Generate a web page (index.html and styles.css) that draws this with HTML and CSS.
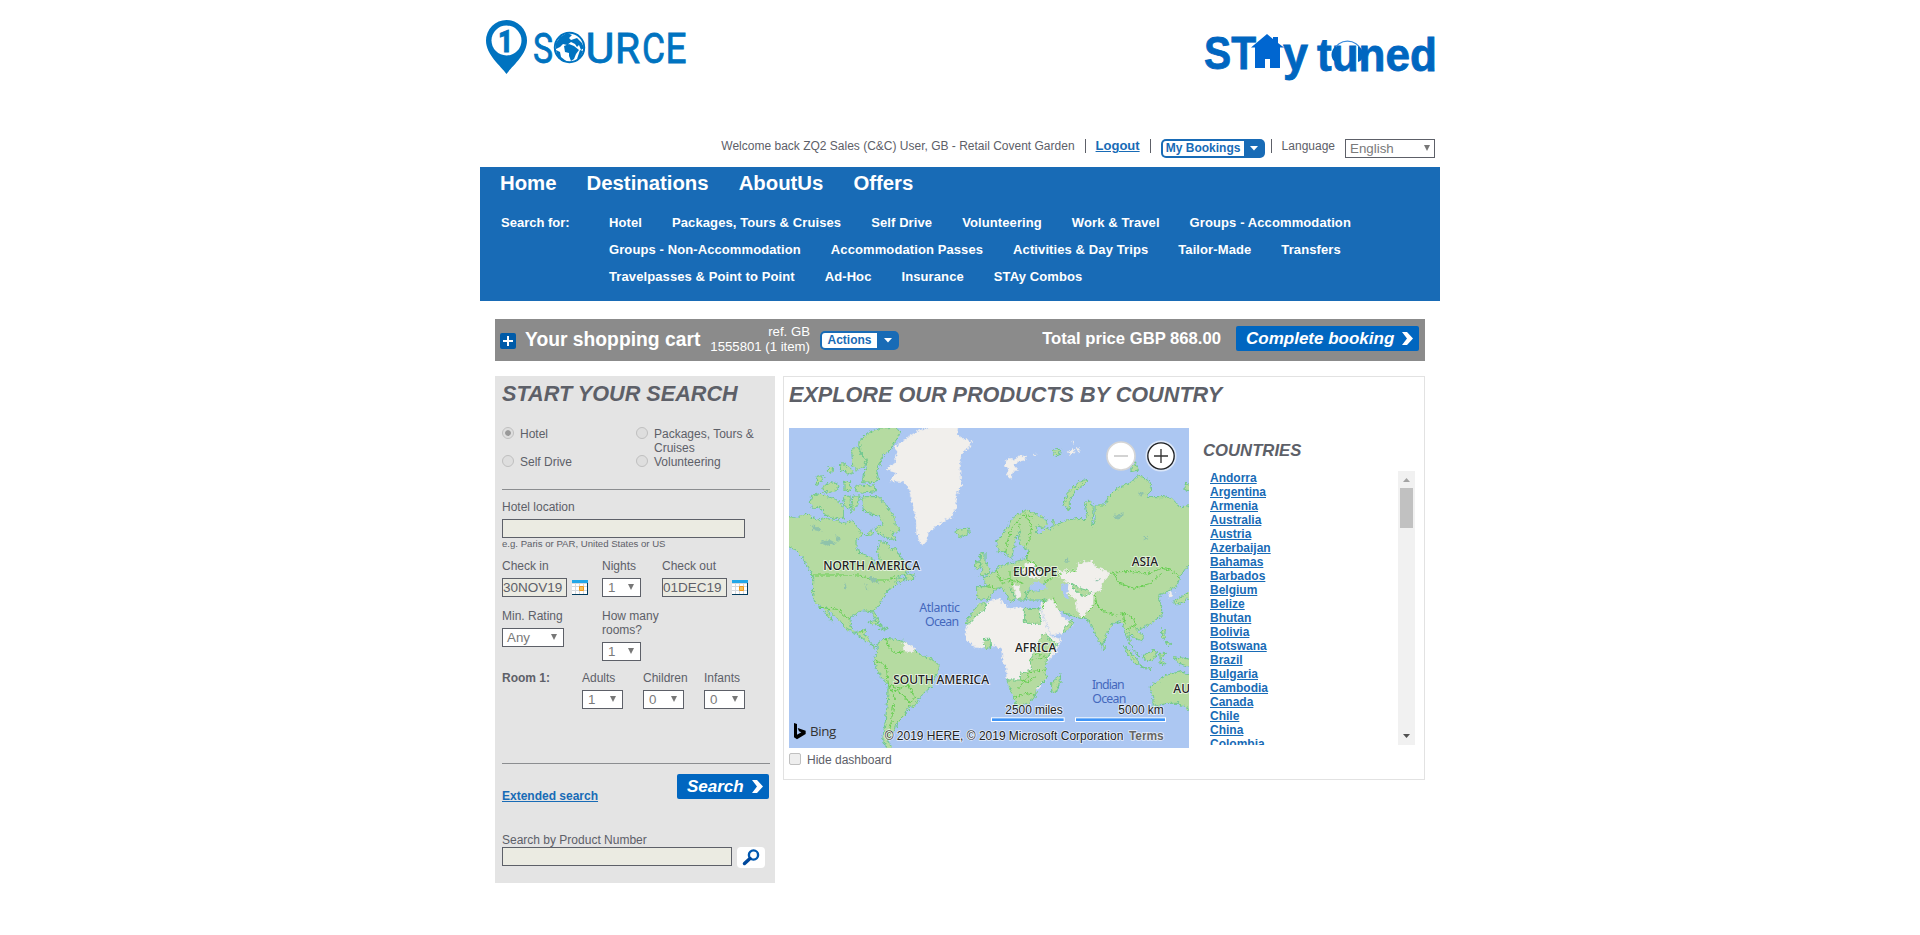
FILE: index.html
```html
<!DOCTYPE html>
<html lang="en">
<head>
<meta charset="utf-8">
<title>1Source</title>
<link rel="stylesheet" href="styles.css">
</head>
<body>
<div class="page">
  <header class="header">
    <svg class="logo" viewBox="480 10 220 70" width="220" height="70">
      <path fill="#0073c0" d="M506.500 74C501 66 486 55 486 40.500A20.500 20.500 0 1 1 527 40.500C527 55 512 66 506.500 74Z"/>
      <circle cx="506.500" cy="40.500" r="15" fill="#fff"/>
      <g class="logo-text">
        <text class="logo-one" x="498" y="52" textLength="15" lengthAdjust="spacingAndGlyphs">1</text>
        <text x="533" y="63" textLength="20" lengthAdjust="spacingAndGlyphs">S</text>
        <text x="585.500" y="63" textLength="29" lengthAdjust="spacingAndGlyphs">U</text>
        <text x="615" y="63" textLength="25" lengthAdjust="spacingAndGlyphs">R</text>
        <text x="642" y="63" textLength="23" lengthAdjust="spacingAndGlyphs">C</text>
        <text x="665.500" y="63" textLength="21" lengthAdjust="spacingAndGlyphs">E</text>
      </g>
      <circle cx="569.500" cy="47.500" r="14.700" fill="#fff" stroke="#0073c0" stroke-width="2"/>
      <path fill="#0073c0" d="M556 43L560 37L567 33L572 35L569 38L571 40L577 38L582 43L584 48L581 50L579 45L577 47L575 44L571 42L567 45L563 44L560 47L556 49ZM564 46L569 44L574 46L579 50L576 54L574 59L571 61L569 56L569 53L565 52ZM556 50L560 52L561 57L566 61L564 62L558 58ZM580 50L583 51L580 58L577 59Z"/>
    </svg>
    <svg class="slogan" viewBox="1200 20 240 70" width="240" height="70">
      <g class="slogan-text">
        <text x="1204" y="69" textLength="52" lengthAdjust="spacingAndGlyphs">ST</text>
        <text x="1283" y="70" textLength="25" lengthAdjust="spacingAndGlyphs">y</text>
        <text x="1317" y="70.500" textLength="120" lengthAdjust="spacingAndGlyphs">tuned</text>
      </g>
      <path fill="#0066d0" d="M1251 47.500L1267 34L1273 39V37H1278V43L1284 47.500H1280V68H1270V59H1265V68H1255V47.500Z"/>
      <path fill="none" stroke="#3b8bdc" stroke-width="1.200" d="M1334 50A14 12 0 0 1 1361 50"/>
      <path fill="#0066c0" d="M1336 46V62C1330 60 1330 50 1336 46ZM1358 46V62C1365 60 1365 50 1358 46Z"/>
    </svg>
  </header>

  <div class="userbar">
    <span class="welcome">Welcome back ZQ2 Sales (C&amp;C) User, GB - Retail Covent Garden</span>
    <i class="bar"></i>
    <a class="logout">Logout</a>
    <i class="bar"></i>
    <span class="pill bookings"><b>My Bookings</b><svg width="8" height="5"><path d="M0 0H8L4 4.500Z" fill="#fff"/></svg></span>
    <i class="bar bar-lang"></i>
    <span class="language">Language</span>
    <span class="select lang"><span>English</span><i></i></span>
  </div>

  <nav class="nav">
    <div class="nav-main"><a>Home</a><a>Destinations</a><a>AboutUs</a><a>Offers</a></div>
    <div class="nav-search">
      <span class="nav-label">Search for:</span>
      <div class="nav-rows">
        <div><a>Hotel</a><a>Packages, Tours &amp; Cruises</a><a>Self Drive</a><a>Volunteering</a><a>Work &amp; Travel</a><a>Groups - Accommodation</a></div>
        <div><a>Groups - Non-Accommodation</a><a>Accommodation Passes</a><a>Activities &amp; Day Trips</a><a>Tailor-Made</a><a>Transfers</a></div>
        <div><a>Travelpasses &amp; Point to Point</a><a>Ad-Hoc</a><a>Insurance</a><a>STAy Combos</a></div>
      </div>
    </div>
  </nav>

  <section class="cart">
    <svg class="plus" width="16" height="16"><rect width="16" height="16" rx="2" fill="#005ba8"/><path d="M3 8H13M8 3V13" stroke="#fff" stroke-width="2"/></svg>
    <h2>Your shopping cart</h2>
    <p class="ref">ref. GB<br>1555801 (1 item)</p>
    <span class="pill actions"><b>Actions</b><svg width="8" height="5"><path d="M0 0H8L4 4.500Z" fill="#fff"/></svg></span>
    <strong class="total">Total price GBP 868.00</strong>
    <a class="button complete">Complete booking<svg width="11" height="13" viewBox="0 0 11 13"><path d="M0 0H5L11 6.500L5 13H0L5 6.500Z" fill="#fff"/></svg></a>
  </section>

  <main class="columns">
    <aside class="search">
      <h1>START YOUR SEARCH</h1>
      <div class="types">
        <label><i class="radio on"></i>Hotel</label>
        <label><i class="radio"></i>Packages, Tours &amp; Cruises</label>
        <label><i class="radio"></i>Self Drive</label>
        <label><i class="radio"></i>Volunteering</label>
      </div>
      <div class="block location">
        <label>Hotel location</label>
        <input class="field wide" type="text">
        <small>e.g. Paris or PAR, United States or US</small>
      </div>
      <div class="row dates">
        <div class="cell"><label>Check in</label><div class="date"><input class="field" value="30NOV19"><svg width="16" height="15"><use href="#cal"/></svg></div></div>
        <div class="cell nights"><label>Nights</label><span class="select s39"><span>1</span><i></i></span></div>
        <div class="cell"><label>Check out</label><div class="date"><input class="field" value="01DEC19"><svg width="16" height="15"><use href="#cal"/></svg></div></div>
      </div>
      <div class="row rating">
        <div class="cell"><label>Min. Rating</label><span class="select s62"><span>Any</span><i></i></span></div>
        <div class="cell rooms"><label>How many rooms?</label><span class="select s39"><span>1</span><i></i></span></div>
      </div>
      <div class="row guests">
        <b>Room 1:</b>
        <div class="cell"><label>Adults</label><span class="select s41"><span>1</span><i></i></span></div>
        <div class="cell"><label>Children</label><span class="select s41"><span>0</span><i></i></span></div>
        <div class="cell"><label>Infants</label><span class="select s41"><span>0</span><i></i></span></div>
      </div>
      <div class="submit">
        <a class="link">Extended search</a>
        <a class="button go">Search<svg width="11" height="13" viewBox="0 0 11 13"><path d="M0 0H5L11 6.500L5 13H0L5 6.500Z" fill="#fff"/></svg></a>
      </div>
      <label class="product-label">Search by Product Number</label>
      <div class="product">
        <input class="field" type="text">
        <svg width="28" height="21"><rect width="28" height="21" rx="4" fill="#fff"/><circle cx="16.500" cy="8" r="4.600" fill="none" stroke="#0058b0" stroke-width="2.400"/><path d="M13 11.500L7.500 16.500" stroke="#00489c" stroke-width="3.500" stroke-linecap="round"/></svg>
      </div>
    </aside>

    <section class="explore">
      <h1>EXPLORE OUR PRODUCTS BY COUNTRY</h1>
      <div class="explore-body">
        <div class="map-col">
          <svg class="map" viewBox="27 174 1200 960" width="400" height="320">
            <defs>
              <filter id="coast" x="-5%" y="-5%" width="110%" height="110%"><feTurbulence type="fractalNoise" baseFrequency="0.12" numOctaves="3" seed="4"/><feDisplacementMap in="SourceGraphic" scale="16" xChannelSelector="R" yChannelSelector="G"/></filter>
            </defs>
            <rect x="27" y="174" width="1200" height="960" fill="#acc7f2"/>
            <g filter="url(#coast)">
              <g class="land">
                <path d="M7 435L50 445L80 432L110 450L140 445L175 455L200 460L215 450L230 468L240 480L245 495L228 510L228 530L240 550L258 555L275 565L285 585L298 570L292 540L300 515L322 518L330 540L350 535L360 560L380 585L392 600L360 618L345 630L370 622L375 632L350 640L335 655L325 660L305 690L300 705L280 722L290 740L298 755L288 754L275 725L245 722L215 740L210 765L225 788L245 780L258 777L252 795L265 800L275 825L292 830L285 835L260 815L235 795L200 778L180 755L160 735L140 710L145 725L160 757L150 748L125 712L105 700L97 670L98 640L98 615L85 595L65 560L45 540L7 520Z"/>
                <path d="M236 215L270 185L300 174L350 172L362 190L345 215L330 240L305 260L300 285L290 300L295 325L285 338L245 335L250 315L262 290L255 265L240 245Z"/>
                <path d="M215 240L232 228L240 250L258 265L255 290L232 300L218 285Z"/>
                <path d="M178 280L195 283L215 298L220 308L205 312L182 300ZM146 290L158 292L155 310L145 305ZM112 318L130 318L125 335L108 345ZM128 350L155 335L178 345L172 362L145 368L130 360ZM192 335L212 335L210 362L192 360ZM230 345L285 348L288 365L240 370L225 360ZM95 375L125 370L140 380L165 385L190 410L190 445L160 445L130 430L120 410L100 415L90 400ZM190 380L210 378L212 415L195 410ZM218 378L240 378L235 400L215 430Z"/>
                <path d="M245 380L295 380L315 400L330 425L345 440L345 460L360 475L355 490L335 485L348 512L310 500L285 480L290 470L310 465L300 440L270 430L250 420Z"/>
                <path d="M258 495L275 480L280 495ZM375 610L402 615L400 628L378 628Z"/>
                <path d="M525 480L545 477L565 474L568 488L545 502L532 495Z"/>
                <path d="M602 548L615 548L615 575L630 595L628 612L600 618L608 595L600 575ZM590 572L602 580L600 595L585 598Z"/>
                <path d="M650 515L680 475L700 440L740 420L760 430L795 445L802 460L790 475L770 470L770 490L785 490L800 475L808 478L820 470L815 450L830 465L860 450L900 445L912 450L922 440L915 400L928 390L940 410L935 470L945 455L945 405L975 405L985 380L1005 360L1055 335L1075 315L1110 335L1115 360L1100 380L1150 380L1175 385L1200 410L1247 405L1247 570L1220 590L1200 620L1190 650L1155 668L1135 675L1145 710L1145 735L1115 760L1085 775L1070 780L1090 800L1085 815L1060 800L1045 790L1055 830L1078 858L1065 848L1050 825L1042 800L1030 770L1020 755L1000 760L980 790L970 830L960 820L935 770L920 745L900 745L870 735L825 715L815 695L790 690L745 690L735 665L790 660L795 640L770 655L750 650L745 665L735 690L715 690L690 655L710 685L692 695L665 650L640 665L625 690L590 685L590 650L620 650L610 625L650 600L655 590L690 580L740 565L745 540L735 535L720 525L715 500L722 480L708 500L695 565L670 545L655 545Z"/>
                <path d="M850 405L862 370L885 345L918 328L920 335L885 365L868 395L868 420ZM1055 290L1065 275L1075 300L1052 305ZM818 240L842 238L838 255L825 258Z"/>
                <path d="M290 820L315 805L345 808L372 815L400 835L415 850L430 858L460 868L478 888L475 905L462 925L455 950L430 970L415 990L402 1010L385 1013L375 1035L350 1060L345 1080L335 1095L325 1115L340 1144L325 1144L308 1110L315 1060L322 1000L325 945L305 925L290 895L280 872L290 850L295 830Z"/>
                <path d="M262 757L285 752L310 770L290 765ZM298 775L325 775L315 780Z"/>
                <path d="M815 937L835 920L843 910L840 935L828 968L815 965Z"/>
                <path d="M1110 950L1130 935L1160 915L1200 905L1247 920V1030L1195 1000L1160 1000L1120 1010L1118 980Z"/>
                <path d="M1033 830L1065 860L1082 885L1070 885L1045 855ZM1080 890L1115 895L1110 900ZM1090 855L1125 840L1130 850L1118 872L1095 870ZM1140 850L1160 850L1142 862L1155 885L1140 880ZM1145 778L1155 780L1155 805L1145 800ZM1155 815L1172 820L1168 830ZM1180 860L1247 870V895L1195 880ZM1180 695L1205 680L1247 650V675L1190 705ZM1215 340L1247 345V365L1215 360ZM968 822L978 832L970 842Z"/>
              </g>
              <g class="plain">
                <path d="M318 295L345 280L352 245L345 230L385 200L420 180L480 164L535 164L530 195L550 205L575 215L565 235L545 250L538 290L545 345L530 370L528 415L515 440L480 460L445 490L438 520L422 522L410 490L408 450L398 400L385 350L370 335L330 332L350 310Z"/>
                <path d="M555 785L560 765L597 700L620 697L660 685L668 700L690 715L710 712L735 715L785 722L790 745L800 770L815 800L843 808L825 850L800 875L795 905L800 925L770 960L765 985L740 1003L710 1010L700 980L680 930L680 900L668 870L665 840L645 825L620 835L585 832L560 810Z"/>
                <path d="M780 700L815 688L850 745L875 755L880 765L845 790L815 795L795 750Z"/>
                <path d="M833 602L860 602L890 600L895 580L935 575L945 590L990 610L965 640L965 660L940 668L938 705L905 745L888 715L890 690L862 668L865 640L840 620Z"/>
                <path d="M735 580L760 575L765 595L785 605L780 625L745 620L730 605ZM700 645L718 645L722 675L712 690L705 665ZM370 815L405 835L400 845L375 843Z"/>
                <path d="M675 275L690 265L702 272L712 258L740 258L736 268L715 275L700 285L712 300L700 305L692 325L680 312L688 295L678 290ZM865 245L880 238L885 248L870 255ZM888 235L903 237L895 248ZM875 215L880 213L880 220ZM762 253L768 253L766 258Z"/>
                <path d="M1165 665L1180 670L1170 685Z"/>
              </g>
              <g class="land">
                <path d="M555 762L575 730L600 698L622 700L615 718L590 735L570 758Z"/>
                <path d="M733 715L780 716L778 735L785 760H733ZM612 808H630L632 832L615 836Z"/>
                <path d="M785 795L800 792L812 810L833 822L815 840L800 865L795 905L800 925L770 955L765 985L740 1003L710 1010L700 980L680 930L720 930L722 910L755 900L750 870L760 850L770 830Z"/>
                <path d="M850 780L875 748L882 756L865 780L848 788ZM872 640L900 655L935 665L915 680L890 665Z"/>
              </g>
              <g class="seas"><path d="M748 648L765 635L795 640L800 658L770 662L750 662ZM850 640L865 642L862 670L868 690L855 685L845 655Z"/></g>
              <g class="borders">
                <path d="M98 615H235L255 622L275 630L325 630L345 620M120 712L175 718L190 735L210 750M235 790L250 780M315 805L325 830L345 850L372 845M283 870L310 880L320 900L325 945L360 955L385 945L405 985L385 1010M325 945L345 980L325 1110M340 955L370 975L390 1000M677 560L680 525L690 485L715 450L740 432L760 445M722 480L715 455M735 430L755 470L750 510L735 530M745 540L740 570L765 580L775 600L830 602M620 650L650 655M650 600L660 630L690 625L690 605L740 590M665 640L710 632L735 645M690 625L700 645M890 600L840 610L790 640M990 610L1010 605L1060 605L1100 612L1145 595L1170 600L1200 620M1000 610L1020 640L1060 655L1105 645L1145 610M945 670L950 700L970 725L1010 735L1030 730L1035 760M1030 730L1060 745L1070 780M1040 780L1065 765M905 745L930 720L945 700M820 680L830 710M720 930L745 935L765 920M700 985L735 970L765 975M715 955L735 930L750 905L795 900M750 870L790 865M765 850L800 860M790 690L790 720"/>
              </g>
              <g class="lakes"><path d="M90 465L115 470L125 485L100 480ZM120 515L150 510L170 520L140 527ZM165 495L185 505L175 515ZM265 620L285 622L295 640L275 635ZM255 637L265 660L258 660ZM195 635L200 655L195 655ZM780 460L790 490ZM1000 435L1035 430L1010 450ZM1090 495L1105 505L1092 510ZM860 565L870 575L855 575ZM1075 365L1100 370L1080 378ZM940 630L965 625L950 635Z"/></g>
            </g>
            <g class="continents">
              <text x="130" y="600" textLength="290">NORTH AMERICA</text><text x="699" y="618" textLength="133">EUROPE</text><text x="1055" y="588" textLength="79">ASIA</text>
              <text x="705" y="846" textLength="124">AFRICA</text><text x="340" y="942" textLength="287">SOUTH AMERICA</text><text x="1180" y="969">AU</text>
            </g>
            <g class="oceans">
              <text x="418" y="727" textLength="122">Atlantic</text><text x="435" y="769" textLength="102">Ocean</text>
              <text x="936" y="958" textLength="98">Indian</text><text x="937" y="1000" textLength="102">Ocean</text>
            </g>
            <g class="scales">
              <text x="676" y="1032" textLength="172">2500 miles</text><text x="1015" y="1032" textLength="136">5000 km</text>
              <rect x="634.500" y="1043.500" width="218" height="11"/><rect x="886.500" y="1043.500" width="270" height="11"/>
              <text x="314" y="1110" textLength="716">© 2019 HERE, © 2019 Microsoft Corporation</text><text class="terms" x="1047" y="1110" textLength="104">Terms</text>
            </g>
            <path d="M42 1059L51 1062V1094L64 1087L57 1084L53 1074L77 1082V1092L51 1108L42 1102Z"/>
            <text class="bing" x="90" y="1099" textLength="79">Bing</text>
            <circle cx="1023" cy="258" r="42" fill="#fff" stroke="#d5d5d5" stroke-width="5"/><path d="M1002 258H1044" stroke="#bdbdbd" stroke-width="4"/>
            <circle cx="1143" cy="258" r="44" fill="none" stroke="#dce7f8" stroke-width="5"/><circle cx="1143" cy="258" r="39.500" fill="#fff" stroke="#222" stroke-width="4"/><path d="M1122 258H1164M1143 237V279" stroke="#333" stroke-width="4"/>
          </svg>
          <label class="hide"><i></i>Hide dashboard</label>
        </div>
        <div class="countries">
          <h3>COUNTRIES</h3>
          <div class="scroll">
            <ul><li>Andorra</li><li>Argentina</li><li>Armenia</li><li>Australia</li><li>Austria</li><li>Azerbaijan</li><li>Bahamas</li><li>Barbados</li><li>Belgium</li><li>Belize</li><li>Bhutan</li><li>Bolivia</li><li>Botswana</li><li>Brazil</li><li>Bulgaria</li><li>Cambodia</li><li>Canada</li><li>Chile</li><li>China</li><li>Colombia</li></ul>
            <div class="track"><svg width="7" height="4"><path d="M0 4H7L3.500 0Z" fill="#a3a3a3"/></svg><i></i><svg width="7" height="4"><path d="M0 0H7L3.500 4Z" fill="#505050"/></svg></div>
          </div>
        </div>
      </div>
    </section>
  </main>
</div>
<svg class="defs" width="0" height="0"><symbol id="cal" viewBox="0 0 16 15"><path fill="#003a5c" d="M0 0H16V15H0Z"/><path fill="#d5d9dd" d="M0 0H15V14H0Z"/><path fill="#22a7e8" d="M0 0H16V3H0Z"/><path fill="#fff" d="M0 4H3V6H0ZM4 4H7V6H4ZM8 4H11V6H8ZM12 4H15V6H12ZM0 7H3V10H0ZM4 7H7V10H4ZM12 7H15V10H12ZM0 11H3V14H0ZM4 11H7V14H4ZM8 11H11V14H8ZM12 11H15V14H12Z"/><path fill="#f6c15c" stroke="#f09a1a" d="M7.500 6.500H11.500V10.500H7.500Z"/></symbol></svg>
</body>
</html>
```
FILE: styles.css
```css
* { box-sizing: border-box; }
body { margin: 0; background: #fff; color: #5d6068; font: 12px/14px "Liberation Sans", Arial, sans-serif; }
h1, h2, h3, p, ul { margin: 0; padding: 0; }
svg { display: block; flex: none; }
label { display: block; }
.defs { display: none; }
.page { width: 960px; margin: 0 auto; }

.header { display: flex; justify-content: space-between; height: 137px; padding-top: 10px; }
.slogan { margin-top: 10px; }
.logo-text { fill: #0073c0; font: 400 42px Roboto, sans-serif; stroke: #0073c0; stroke-width: .8; }
.logo-text .logo-one { font-size: 32px; font-weight: 900; }
.slogan-text { fill: #0066c0; font: bold 46px "Liberation Sans", Arial, sans-serif; stroke: #0066c0; stroke-width: .8; }

.userbar { display: flex; justify-content: flex-end; align-items: flex-start; height: 30px; padding: 2px 5px 0 0; white-space: nowrap; }
.bar { width: 1px; height: 14px; margin: 0 10px; background: #5d6068; }
.logout { color: #186bb6; font-size: 13px; font-weight: bold; text-decoration: underline; }
.bar-lang { margin-left: 6px; }
.language { margin-right: 10px; }
.pill { display: flex; align-items: center; height: 19px; padding: 2px 7px 2px 2px; border-radius: 5px; background: #186bb6; color: #186bb6; }
.pill b { height: 15px; line-height: 15px; background: #fff; border-radius: 3px 0 0 3px; text-align: center; }
.pill svg { margin-left: auto; }
.bookings { width: 104px; }
.bookings b { width: 81px; font-size: 12px; }
.actions { width: 79px; }
.actions b { width: 55px; }

.select { display: flex; justify-content: space-between; align-items: center; height: 19px; padding: 0 6px 0 4px; border: 1px solid #5d6068; background: #fff; color: #7a7a7a; font-size: 13.330px; line-height: 17px; }
.select i { border: 3px solid transparent; border-top: 6px solid #777; border-bottom: 0; margin-bottom: 2px; }
.lang { width: 90px; padding: 0 4px; }
.s39 { width: 39px; padding-left: 5px; }
.s41 { width: 41px; padding-left: 5px; }
.s62 { width: 62px; }

.nav { height: 134px; padding: 5px 20px 0; background: #186bb6; color: #fff; font-weight: bold; }
.nav-main { display: flex; gap: 30px; font-size: 20.350px; line-height: 22px; }
.nav-search { display: flex; margin-top: 15px; font-size: 13px; line-height: 27px; white-space: nowrap; }
.nav-label { width: 109px; padding-left: 1px; }
.nav-rows { letter-spacing: .1px; }
.nav-rows > div { display: flex; gap: 30px; }

.cart { display: flex; align-items: flex-start; height: 42px; margin: 18px 15px 15px; padding: 0 6px 0 5px; background: #8b8b8b; color: #fff; white-space: nowrap; }
.plus { margin: 14px 9px 0 0; }
.cart h2 { width: 176px; margin-top: 10px; font-size: 19.300px; line-height: 22px; }
.ref { width: 109px; margin-top: 5px; font-size: 13.200px; line-height: 15px; text-align: right; }
.actions { margin: 12px 0 0 10px; }
.total { margin: 10px 15px 0 auto; font-size: 16.650px; line-height: 20px; }
.button { display: flex; align-items: center; justify-content: space-between; height: 25px; padding: 0 6px 0 10px; border-radius: 2px; background: #0066c0; color: #fff; font-size: 17px; font-weight: bold; font-style: italic; }
.complete { width: 183px; margin-top: 7px; }

.columns { display: flex; align-items: flex-start; gap: 8px; margin: 0 15px; }
.search { width: 280px; height: 507px; padding: 5px 5px 0 7px; background: #e4e4e4; }
h1 { font-size: 21.650px; line-height: 25px; font-style: italic; white-space: nowrap; }
.types { display: grid; grid-template-columns: 134px 1fr; height: 84px; padding-top: 21px; align-content: start; border-bottom: 1px solid #8b8d90; }
.types label { display: flex; gap: 6px; }
.radio { flex: none; width: 12px; height: 12px; border: 1px solid #bfbfbf; border-radius: 50%; background: #dedede; }
.on { background: #999 content-box; padding: 2px; box-shadow: inset 0 0 0 2px #dedede; }
.location { padding-top: 10px; }
.field { height: 19px; padding: 0; border: 1px solid #5d6068; background: #ebebe2; color: #5d6068; font: 13.500px "Liberation Sans", Arial, sans-serif; }
.wide { display: block; width: 243px; margin-top: 5px; }
small { display: block; font-size: 9.600px; line-height: 12px; }
.row { display: flex; }
.cell label { margin-bottom: 5px; }
.dates { margin-top: 9px; }
.date { display: flex; gap: 5px; align-items: center; }
.date .field { width: 65px; }
.nights { width: 60px; margin: 0 0 0 14px; }
.rating { margin-top: 12px; }
.rooms { width: 70px; margin-left: 38px; }
.guests { margin-top: 10px; gap: 20px; height: 93px; border-bottom: 1px solid #8b8d90; }
.guests .cell { width: 41px; }
.guests b { width: 60px; }
.submit { display: flex; justify-content: space-between; padding: 10px 1px 0 0; }
.link { margin-top: 15px; color: #186bb6; font-weight: bold; text-decoration: underline; }
.go { width: 92px; }
.product-label { margin-top: 30px; }
.product { display: flex; gap: 5px; }
.product .field { width: 230px; }

.explore { width: 642px; height: 404px; border: 1px solid #e2e2e2; padding: 5px 9px 0 5px; }
.explore-body { display: flex; margin-top: 21px; }
.map-col { width: 400px; }
.land { fill: #b5dba1; stroke: #6fc98a; stroke-width: 3; }
.plain { fill: #f1efec; stroke: #e8e8ea; stroke-width: 2; }
.seas { fill: #acc7f2; }
.borders { fill: none; stroke: #66cf50; stroke-width: 3; }
.lakes { fill: #8fc3ab; }
.continents { fill: #222; stroke: #fff; stroke-opacity: .75; stroke-width: 5; paint-order: stroke; font: 500 36px "Noto Sans", sans-serif; }
.oceans { fill: #4468bd; font: 37px "Noto Sans", sans-serif; }
.scales { font: 36px "Liberation Sans", Arial, sans-serif; fill: #222; }
.scales text { stroke: #fff; stroke-opacity: .7; stroke-width: 5; paint-order: stroke; }
.scales rect { fill: #3f94f7; stroke: #fff; stroke-width: 3; }
.scales .terms { fill: #666; font-weight: bold; }
.bing { fill: #333; font: 40px "Open Sans", sans-serif; }
.hide { display: flex; gap: 6px; margin-top: 5px; }
.hide i { width: 12px; height: 12px; border: 1px solid #c0c0c0; border-radius: 2px; background: #eee; }
.countries { width: 212px; margin-left: 14px; }
h3 { margin-top: 13px; font-size: 16.700px; line-height: 19px; font-style: italic; }
.scroll { display: flex; justify-content: space-between; height: 274px; margin-top: 11px; overflow: hidden; }
.scroll ul { padding-left: 7px; list-style: none; color: #186bb6; font-weight: bold; text-decoration: underline; }
.track { display: flex; flex-direction: column; align-items: center; width: 17px; padding: 7px 0; background: #f1f1f1; }
.track i { width: 13px; height: 40px; margin-top: 6px; background: #c1c1c1; }
.track svg:last-child { margin-top: auto; }
```
